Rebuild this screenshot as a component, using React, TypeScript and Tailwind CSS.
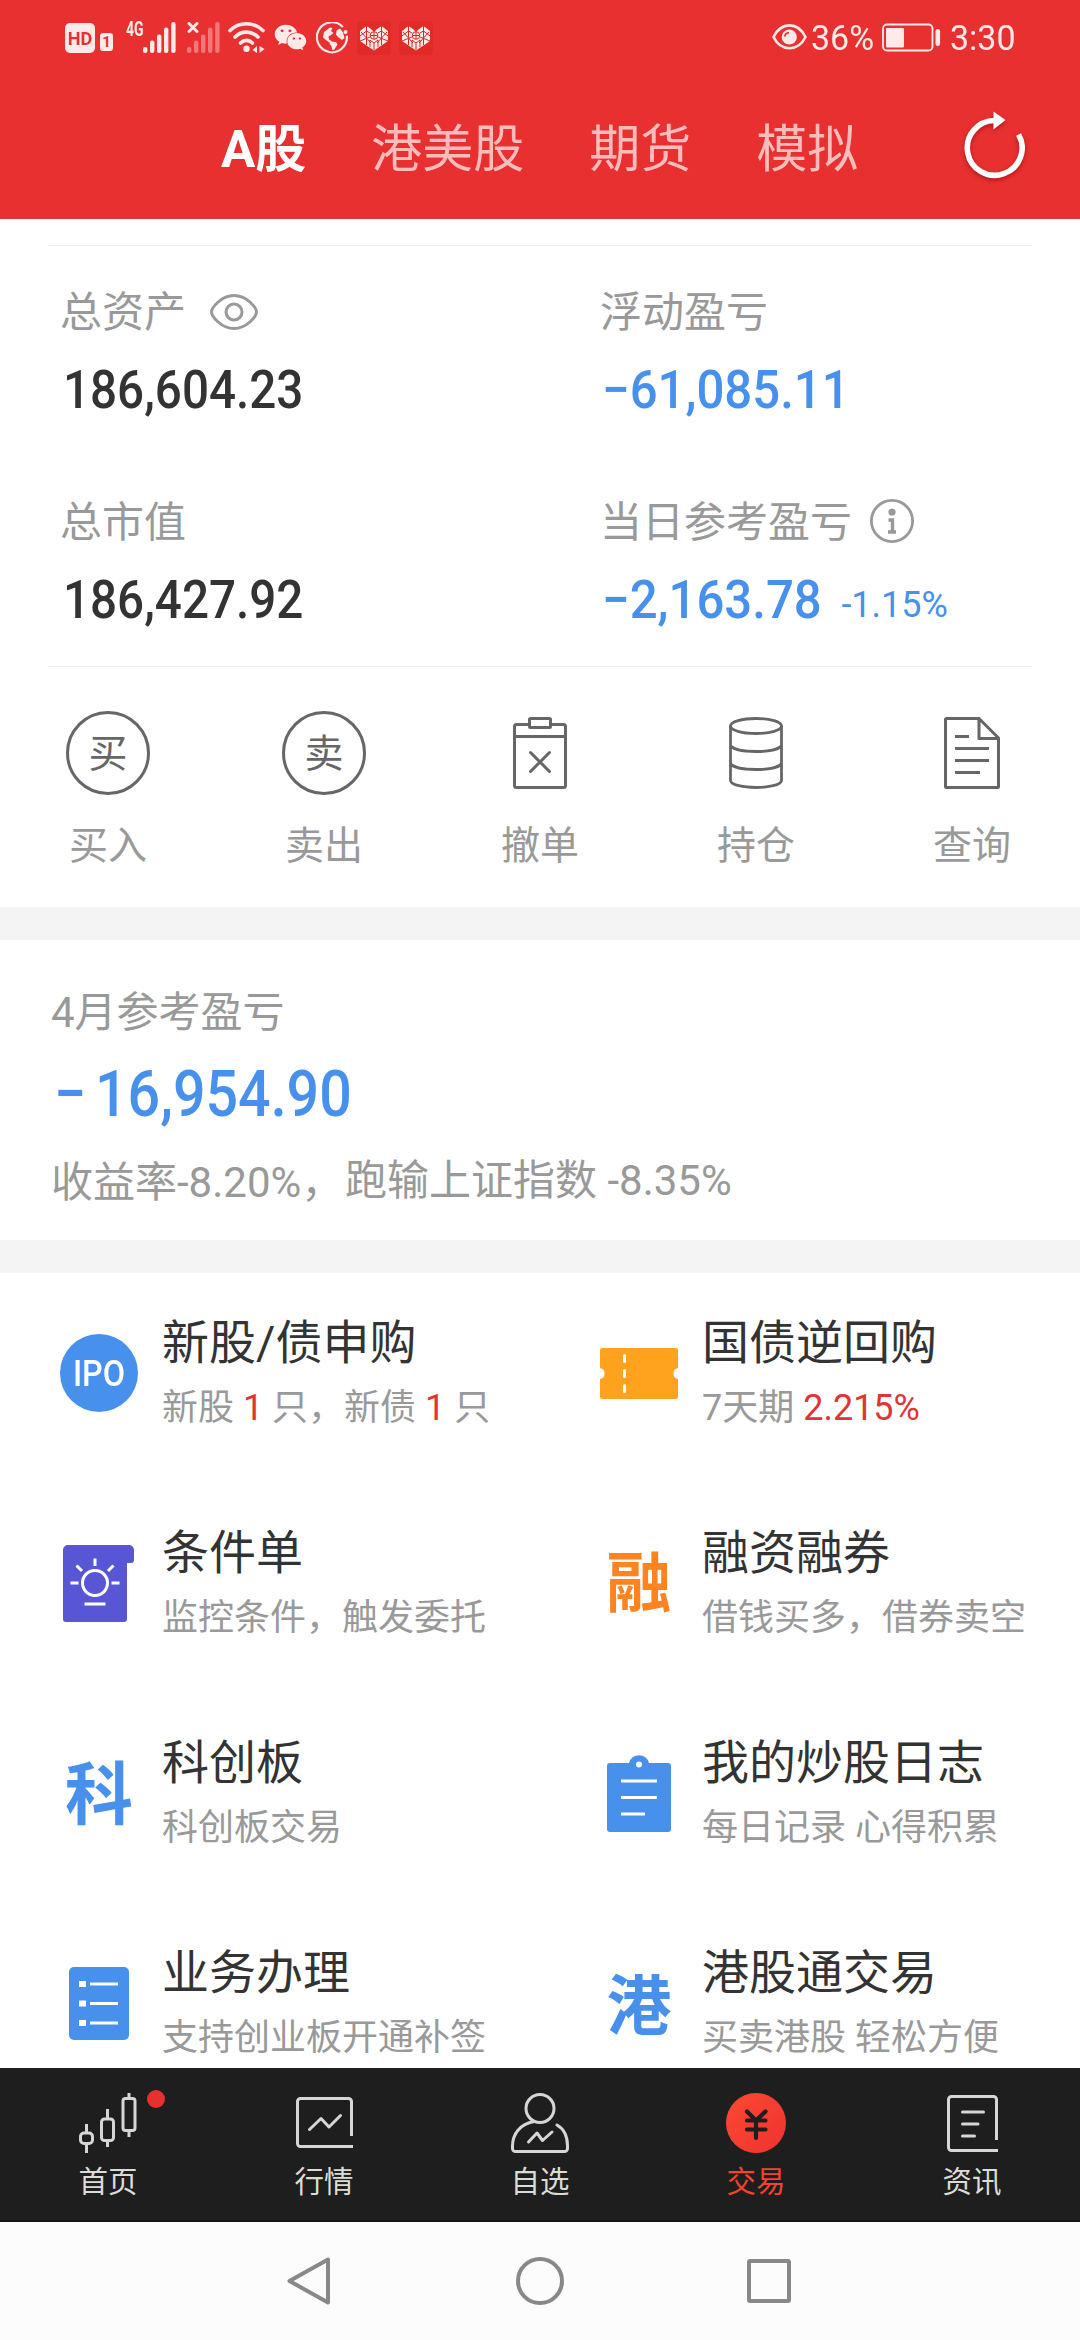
import type { ReactNode } from "react";
import { FaWeixin } from "react-icons/fa";

const PALE = "#ffe9e9";

function SignalBars({ faded = false }: { faded?: boolean }) {
  return (
    <svg width="33" height="31" viewBox="0 0 33 31" fill={faded ? "#f47676" : PALE}>
      <rect x="0" y="25" width="4.4" height="6" rx="2" />
      <rect x="7" y="18.5" width="4.4" height="12.5" rx="2" />
      <rect x="14" y="12.5" width="4.4" height="18.5" rx="2" />
      <rect x="21" y="5.5" width="4.4" height="25.5" rx="2" />
      <rect x="28.2" y="0" width="4.4" height="31" rx="2" />
    </svg>
  );
}

function HeartBadge() {
  return (
    <svg width="34" height="34" viewBox="0 0 34 34">
      <rect width="34" height="34" rx="4" fill="#e02b26" />
      <path d="M3 10 L9.500 5 L14 8 L17 11 L20 8 L24.500 5 L31 10 V20 L17 29.5 L3 20 Z" fill={PALE} />
      <g stroke="#d92a26" strokeWidth="1" fill="none">
        <path d="M9.500 5 V24 M24.500 5 V24 M3 15 L9.500 10 L13 12 M31 15 L24.500 10 L21 12 M3 20 L13 16 M31 20 L21 16 M13 26 V19 L17 22 L21 19 V26 M4 11 L14 22 M30 11 L20 22" />
        <circle cx="17" cy="14.5" r="3.8" />
        <path d="M13.500 14.5 H20.500 M17 11 V18 M17 22 V29" />
      </g>
    </svg>
  );
}

function StatusBar() {
  return (
    <div className="flex h-[75px] items-start pl-[65px] text-[#ffe9e9]">
      <div className="mt-[23px] flex h-[30px] w-[30px] items-center justify-center rounded-[5px] bg-[#ffe9e9] text-[19px] leading-none font-bold text-[#e83030]">
        <span className="inline-block scale-x-[0.95]">HD</span>
      </div>
      <div className="mt-[33px] ml-[5px] flex h-[18px] w-[13px] items-center justify-center rounded-[3px] bg-[#ffe9e9] text-[15px] leading-none font-bold text-[#e83030]">
        1
      </div>
      <div className="mt-[20px] ml-[13px] w-[16px] text-[20px] leading-[18px] font-bold">
        <span className="inline-block origin-left scale-x-[0.7]">4G</span>
      </div>
      <div className="mt-[22px] ml-[1px]">
        <SignalBars />
      </div>
      <div className="relative mt-[22px] ml-[11px]">
        <SignalBars faded />
        <svg className="absolute top-0 left-0" width="12" height="11" viewBox="0 0 12 11">
          <path d="M2 1.5 L10 9.5 M10 1.5 L2 9.5" stroke={PALE} strokeWidth="3" strokeLinecap="round" />
        </svg>
      </div>
      <svg className="mt-[21px] ml-[8px]" width="38" height="33" viewBox="0 0 38 33" fill="none" stroke={PALE} strokeWidth="3.6" strokeLinecap="round">
        <path d="M2 9.5 C11 0.5 26 0.5 35 9.5" />
        <path d="M7 16 C13.5 9.5 23.5 9.5 30 16" />
        <path d="M12.5 22 C16 18.5 21 18.5 24.5 22" />
        <circle cx="18.5" cy="27.8" r="3.2" fill={PALE} stroke="none" />
        <path d="M29 25 V32 L24.5 29 Z M31.5 32 V25 L36.5 28 Z" fill={PALE} stroke="none" />
      </svg>
      <FaWeixin className="mt-[21px] ml-[8px] h-[33px] w-[33px]" />
      <svg className="mt-[22px] ml-[9px]" width="33" height="33" viewBox="0 0 33 33">
        <path d="M26 4.2 A15 15 0 1 0 30.6 12.5" transform="rotate(4 16 16)" fill="none" stroke={PALE} strokeWidth="2.2" />
        <circle cx="29.5" cy="10" r="2" fill={PALE} />
        <path d="M8 10 L14 5.5 L16.5 6 L15 9 L17.5 11 L15 13 L12.5 14.5 L13 17.5 L16 19.5 L14 21 L10 18 L7 15.5 Z M15 19.5 L20 20 L21.5 22.5 L18 28 L16 27.5 L15.5 24 L13.5 22 Z M20.5 8.5 L24 6.5 L27 10.5 L28.5 16 L26 18 L22 15 L20 12.5 Z" fill={PALE} />
      </svg>
      <div className="mt-[21px] ml-[8px] flex gap-[8px]">
        <HeartBadge />
        <HeartBadge />
      </div>
      <svg className="mt-[23px] ml-[339px]" width="35" height="28" viewBox="0 0 35 28">
        <path d="M1.5 14 C9 -1.5 26 -1.5 33.5 14 C26 29 9 29 1.5 14 Z" fill="none" stroke={PALE} strokeWidth="2.6" />
        <circle cx="17.3" cy="14" r="7.6" fill={PALE} />
        <path d="M12.7 13.5 A4.6 4.6 0 0 1 17 9.6" fill="none" stroke="#e83030" strokeWidth="1.8" />
      </svg>
      <span className="mt-[19px] ml-[4px] w-[65px] text-[35px] leading-[40px]">
        <span className="inline-block origin-left scale-x-[0.97]">36%</span>
      </span>
      <svg className="mt-[23px] ml-[6px]" width="59" height="29" viewBox="0 0 59 29">
        <rect x="1" y="1.5" width="49.5" height="26" rx="4" fill="none" stroke={PALE} strokeWidth="1.8" />
        <rect x="4" y="5" width="18" height="19.5" rx="1" fill={PALE} />
        <rect x="53.5" y="6" width="4.6" height="17" rx="2.3" fill={PALE} />
      </svg>
      <span className="mt-[19px] ml-[9px] text-[35px] leading-[40px]">
        <span className="inline-block origin-left scale-x-[0.97]">3:30</span>
      </span>
    </div>
  );
}

function Header() {
  return (
    <header className="h-[219px] bg-[#e83030]">
      <StatusBar />
      <nav className="flex h-[144px] items-center gap-[65px] pt-[4px] pl-[221px] text-[51px] leading-none text-[#ffbcbc]">
        <span className="font-bold text-white">A股</span>
        <span>港美股</span>
        <span>期货</span>
        <span>模拟</span>
        <svg className="mt-[-8px] ml-[38px] drop-shadow-[0_2px_2px_rgba(120,0,0,0.5)]" width="64" height="72" viewBox="0 0 64 72">
          <path d="M33.5 11.5 A27.4 27.4 0 1 0 57.6 25.5" fill="none" stroke="#fff" strokeWidth="5.6" />
          <path d="M32.5 2.5 L44.5 11 L32.5 20.5 Z" fill="#fff" />
        </svg>
      </nav>
    </header>
  );
}

function Stat({ label, icon, value, extra, blue = false }: { label: string; icon?: ReactNode; value: string; extra?: string; blue?: boolean }) {
  return (
    <div className="h-[210px] pl-[60px]">
      <div className="flex h-[54px] items-center text-[42px] leading-[54px] text-[#999]">
        <span>{label}</span>
        {icon}
      </div>
      <div className={blue ? "mt-[18px] flex h-[64px] text-[#4790ec]" : "mt-[18px] flex h-[64px] text-[#333]"}>
        <span className={blue ? "ml-[2px] inline-block origin-left scale-x-[0.918] text-[53.5px] leading-[63px] font-medium" : "ml-[3px] inline-block origin-left scale-x-[0.89] text-[53.5px] leading-[63px] font-medium"}>
          {value}
        </span>
        {extra && <span className="pt-[12px] text-[36px] leading-[50px]">{extra}</span>}
      </div>
    </div>
  );
}

function EyeIcon() {
  return (
    <svg className="mb-[2px] ml-[24px]" width="48" height="36" viewBox="0 0 48 36" fill="none" stroke="#999" strokeWidth="3">
      <path d="M1.5 18 C1.5 14 11 1.5 24 1.5 C37 1.5 46.5 14 46.5 18 C46.5 22 37 34.5 24 34.5 C11 34.5 1.5 22 1.5 18 Z" />
      <circle cx="24" cy="18" r="8" />
    </svg>
  );
}

function InfoIcon() {
  return (
    <svg className="mb-[5px] ml-[18px]" width="44" height="44" viewBox="0 0 44 44">
      <circle cx="22" cy="22" r="20.6" fill="none" stroke="#999" strokeWidth="2.8" />
      <circle cx="22" cy="13" r="3.6" fill="#999" />
      <path d="M18.5 21 H22.5 V33 M18 33 H26" fill="none" stroke="#999" strokeWidth="3.4" />
    </svg>
  );
}

function Action({ icon, label }: { icon: ReactNode; label: string }) {
  return (
    <div className="flex w-[216px] flex-col items-center">
      <div className="flex h-[84px] items-center justify-center">{icon}</div>
      <span className="mt-[26px] text-[39px] leading-[50px] text-[#999]">{label}</span>
    </div>
  );
}

function RoundGlyph({ children }: { children: ReactNode }) {
  return (
    <div className="flex h-[84px] w-[84px] items-center justify-center rounded-full border-[3px] border-[#666] pt-[3px] text-[39px] leading-none text-[#666]">
      {children}
    </div>
  );
}

function Actions() {
  return (
    <div className="flex h-[240px] pt-[44px]">
      <Action label="买入" icon={<RoundGlyph>买</RoundGlyph>} />
      <Action label="卖出" icon={<RoundGlyph>卖</RoundGlyph>} />
      <Action
        label="撤单"
        icon={
          <svg width="54" height="72" viewBox="0 0 54 72" fill="none" stroke="#666" strokeWidth="3">
            <path d="M16.5 7.5 H3.5 A2 2 0 0 0 1.5 9.5 V68.5 A2 2 0 0 0 3.5 70.5 H50.5 A2 2 0 0 0 52.5 68.5 V9.5 A2 2 0 0 0 50.5 7.5 H37.5 M1.5 19.5 H52.5" />
            <rect x="16.5" y="1.5" width="21" height="9" rx="1" />
            <path d="M17.5 35.5 L36.5 54.5 M36.5 35.5 L17.5 54.5" strokeLinecap="round" />
          </svg>
        }
      />
      <Action
        label="持仓"
        icon={
          <svg width="54" height="72" viewBox="0 0 54 72" fill="none" stroke="#666" strokeWidth="2.8">
            <ellipse cx="27" cy="9" rx="25.5" ry="7.5" />
            <path d="M1.5 9 V63.5 C3 72.8 51 72.8 52.5 63.5 V9 M1.5 28.5 C6 36.5 48 36.5 52.5 28.5 M1.5 46.5 C6 54.5 48 54.5 52.5 46.5" />
          </svg>
        }
      />
      <Action
        label="查询"
        icon={
          <svg width="56" height="72" viewBox="0 0 56 72" fill="none" stroke="#666" strokeWidth="3" strokeLinejoin="round">
            <path d="M35 1.5 H2.5 A1 1 0 0 0 1.5 2.5 V69.5 A1 1 0 0 0 2.5 70.5 H53.5 A1 1 0 0 0 54.5 69.5 V21 L35 1.5 V21.5 H54.5 M11 19.5 H25 M11 31.5 H45 M11 43.5 H45 M11 55.5 H36" />
          </svg>
        }
      />
    </div>
  );
}

function MonthSummary() {
  return (
    <section className="h-[300px] pt-[46px] pl-[51px] text-[#999]">
      <div className="text-[42px] leading-[54px]">4月参考盈亏</div>
      <div className="mt-[16px] h-[76px] text-[65.5px] leading-[76px] font-medium text-[#4790ec]">
        <span className="ml-[3px] inline-block origin-left scale-x-[0.875] whitespace-nowrap">
          <span className="mr-[10px]">−</span>16,954.90
        </span>
      </div>
      <div className="mt-[22px] flex items-start text-[42px] leading-[54px]">
        <span className="w-[294px] pt-[2px] whitespace-nowrap">收益率-8.20%，</span>
        <span className="whitespace-nowrap">跑输上证指数 -8.35%</span>
      </div>
    </section>
  );
}

function Service({ icon, title, children }: { icon: ReactNode; title: string; children: ReactNode }) {
  return (
    <div className="flex h-[210px] pl-[60px]">
      <div className="mt-[61px] flex h-[78px] w-[78px] items-center justify-center">{icon}</div>
      <div className="ml-[24px] pt-[40px] whitespace-nowrap">
        <div className="text-[47px] leading-[60px] text-[#333]">{title}</div>
        <div className="mt-[12px] text-[36px] leading-[46px] text-[#999]">{children}</div>
      </div>
    </div>
  );
}

function Services() {
  return (
    <section className="grid h-[795px] grid-cols-2 content-start overflow-hidden">
      <Service
        title="新股/债申购"
        icon={
          <div className="flex h-[78px] w-[78px] items-center justify-center rounded-full bg-[#4790ec] pt-[2px] text-[36px] leading-none font-medium text-white">
            <span className="inline-block scale-x-[0.9]">IPO</span>
          </div>
        }
      >
        新股 <span className="text-[#e03535]">1</span> 只，新债 <span className="text-[#e03535]">1</span> 只
      </Service>
      <Service
        title="国债逆回购"
        icon={
          <svg width="78" height="51" viewBox="0 0 78 51">
            <path d="M2.5 0 H75.5 A2.5 2.5 0 0 1 78 2.5 V20 A5.6 5.6 0 0 0 78 31 V48.5 A2.5 2.5 0 0 1 75.5 51 H2.5 A2.5 2.5 0 0 1 0 48.5 V31 A5.6 5.6 0 0 0 0 20 V2.5 A2.5 2.5 0 0 1 2.5 0 Z" fill="#ffa21d" />
            <path d="M24.5 7.5 V13.5 M24.5 22.5 V28.5 M24.5 37.5 V43.5" stroke="#fff" strokeWidth="3" strokeLinecap="round" />
          </svg>
        }
      >
        7天期 <span className="text-[#e03535]">2.215%</span>
      </Service>
      <Service
        title="条件单"
        icon={
          <svg width="72" height="77" viewBox="0 0 72 77">
            <path d="M5 0 H66 A5 5 0 0 1 71 5 V15 A3 3 0 0 1 68 18 H64 V74 A3 3 0 0 1 61 77 H3 A3 3 0 0 1 0 74 V5 A5 5 0 0 1 5 0 Z" fill="#5956d6" />
            <g stroke="#fff" strokeWidth="3" fill="none">
              <circle cx="32" cy="38" r="12.5" />
              <path d="M32 13.5 V21 M13.5 20.5 L19 26 M50.5 20.5 L45 26 M7.5 38 H15.5 M48.5 38 H56.5 M21.5 59 H42.5" />
            </g>
          </svg>
        }
      >
        监控条件，触发委托
      </Service>
      <Service title="融资融券" icon={<span className="pt-[3px] text-[65px] leading-none font-bold text-[#ff8320]">融</span>}>
        借钱买多，借券卖空
      </Service>
      <Service title="科创板" icon={<span className="pt-[6px] text-[68px] leading-none font-bold text-[#4790ec]">科</span>}>
        科创板交易
      </Service>
      <Service
        title="我的炒股日志"
        icon={
          <svg width="64" height="78" viewBox="0 0 64 78">
            <path fillRule="evenodd" d="M3 9 H22 A10.3 10.3 0 0 1 42 9 H61 A3 3 0 0 1 64 12 V75 A3 3 0 0 1 61 78 H3 A3 3 0 0 1 0 75 V12 A3 3 0 0 1 3 9 Z M32 7.5 A3 3 0 1 0 32 13.5 A3 3 0 1 0 32 7.5 Z" fill="#4790ec" />
            <path d="M14 27 H50 M14 43.5 H50 M14 60 H38" stroke="#fff" strokeWidth="3" />
          </svg>
        }
      >
        每日记录 心得积累
      </Service>
      <Service
        title="业务办理"
        icon={
          <svg width="60" height="73" viewBox="0 0 60 73">
            <rect width="60" height="73" rx="5" fill="#4790ec" />
            <path d="M10 17 H17 M10 36.5 H17 M10 56 H17" stroke="#fff" strokeWidth="6" />
            <path d="M21 17 H49 M21 36.5 H49 M21 56 H49" stroke="#fff" strokeWidth="3" />
          </svg>
        }
      >
        支持创业板开通补签
      </Service>
      <Service title="港股通交易" icon={<span className="pt-[8px] text-[65px] leading-none font-bold text-[#4790ec]">港</span>}>
        买卖港股 轻松方便
      </Service>
    </section>
  );
}

function Tab({ label, icon, active = false, dot = false }: { label: string; icon: ReactNode; active?: boolean; dot?: boolean }) {
  return (
    <div className="relative flex w-[216px] flex-col items-center pt-[25px]">
      <div className="flex h-[60px] items-center justify-center">{icon}</div>
      <span className={active ? "mt-[9px] text-[29.5px] leading-[40px] text-[#f5432f]" : "mt-[9px] text-[29.5px] leading-[40px] text-[#dcdcd6]"}>{label}</span>
      {dot && <span className="absolute top-[22px] left-[147px] h-[18px] w-[18px] rounded-full bg-[#e83030]" />}
    </div>
  );
}

function TabBar() {
  return (
    <nav className="flex h-[154px] border-b-2 border-[#141414] bg-[#1e1e1e]">
      <Tab
        label="首页"
        dot
        icon={
          <svg width="58" height="60" viewBox="0 0 58 60" fill="none" stroke="#d6d6d6" strokeWidth="3">
            <rect x="1.5" y="40" width="12" height="10.5" rx="3.5" />
            <rect x="22.5" y="26" width="12" height="21.5" rx="3" />
            <rect x="44" y="5.5" width="12" height="32" rx="2.5" />
            <path d="M7.5 31 V40 M7.5 50.5 V60 M28.5 16 V26 M28.5 47.5 V54 M50 0 V5.5 M50 37.5 V44" />
          </svg>
        }
      />
      <Tab
        label="行情"
        icon={
          <svg className="mt-[-1px]" width="57" height="51" viewBox="0 0 57 51" fill="none" stroke="#d6d6d6" strokeWidth="3">
            <path d="M57 49.5 H4.5 A3 3 0 0 1 1.5 46.5 V4.5 A3 3 0 0 1 4.5 1.5 H52.5 A3 3 0 0 1 55.5 4.5 V39" />
            <path d="M13.5 32.5 L25 21.5 L33 30 L44.5 18.5" strokeLinecap="round" strokeLinejoin="round" />
          </svg>
        }
      />
      <Tab
        label="自选"
        icon={
          <svg width="58" height="60" viewBox="0 0 58 60" fill="none" stroke="#d6d6d6" strokeWidth="3" strokeLinecap="round">
            <circle cx="29" cy="15.5" r="14" />
            <path d="M23 28.5 C9 31 1.5 41 1.5 53 V55.5 A3 3 0 0 0 4.5 58.5 H53.5 A3 3 0 0 0 56.5 55.5 V53 C56.5 43 53 36 46 32" />
            <path d="M17.5 49 L26 40 L31.5 47.5 L41 39" strokeLinejoin="round" />
          </svg>
        }
      />
      <Tab
        label="交易"
        active
        icon={
          <svg width="60" height="60" viewBox="0 0 60 60">
            <defs>
              <linearGradient id="coin" x1="0" y1="0" x2="1" y2="1">
                <stop offset="0" stopColor="#fd4a32" />
                <stop offset="1" stopColor="#ee3230" />
              </linearGradient>
            </defs>
            <circle cx="30" cy="30" r="30" fill="url(#coin)" />
            <path d="M21 18.5 L30 27.5 L39.5 18.5 M30 27.5 V45 M21 27.5 H39.5 M21 36.5 H39.5" fill="none" stroke="#1e1e1e" strokeWidth="4.2" strokeLinecap="round" strokeLinejoin="round" />
          </svg>
        }
      />
      <Tab
        label="资讯"
        icon={
          <svg width="51" height="57" viewBox="0 0 51 57" fill="none" stroke="#d6d6d6" strokeWidth="3">
            <path d="M51 55.5 H4.5 A3 3 0 0 1 1.5 52.5 V4.5 A3 3 0 0 1 4.5 1.5 H46.5 A3 3 0 0 1 49.5 4.5 V45" />
            <path d="M15.5 17 H36.5 M15.5 29 H31 M15.5 41 H27.5" strokeLinecap="round" />
          </svg>
        }
      />
    </nav>
  );
}

function SystemNav() {
  return (
    <div className="flex h-[118px] items-center bg-[#fcfcfc] pl-[286px]">
      <svg width="45" height="50" viewBox="0 0 45 50" fill="none" stroke="#888" strokeWidth="4" strokeLinejoin="round">
        <path d="M42 3.5 V46.5 L3.5 25 Z" />
      </svg>
      <div className="ml-[185px] h-[48px] w-[48px] rounded-full border-[4px] border-[#888]" />
      <div className="ml-[183px] h-[44px] w-[44px] rounded-[3px] border-[4px] border-[#888]" />
    </div>
  );
}

export default function App() {
  return (
    <div className="h-[2340px] w-[1080px] overflow-hidden bg-white font-[Roboto,'Noto_Sans_CJK_SC',sans-serif]">
      <Header />
      <section className="h-[448px] pt-[26px]">
        <div className="mx-[48px] h-px bg-[#ececec]" />
        <div className="grid h-[420px] grid-cols-2 pt-[40px]">
          <Stat label="总资产" value="186,604.23" icon={<EyeIcon />} />
          <Stat label="浮动盈亏" value="−61,085.11" blue />
          <Stat label="总市值" value="186,427.92" />
          <Stat label="当日参考盈亏" value="−2,163.78" extra="-1.15%" icon={<InfoIcon />} blue />
        </div>
        <div className="mx-[48px] h-px bg-[#ececec]" />
      </section>
      <Actions />
      <div className="h-[33px] bg-[#f4f4f4]" />
      <MonthSummary />
      <div className="h-[33px] bg-[#f4f4f4]" />
      <Services />
      <TabBar />
      <SystemNav />
    </div>
  );
}
